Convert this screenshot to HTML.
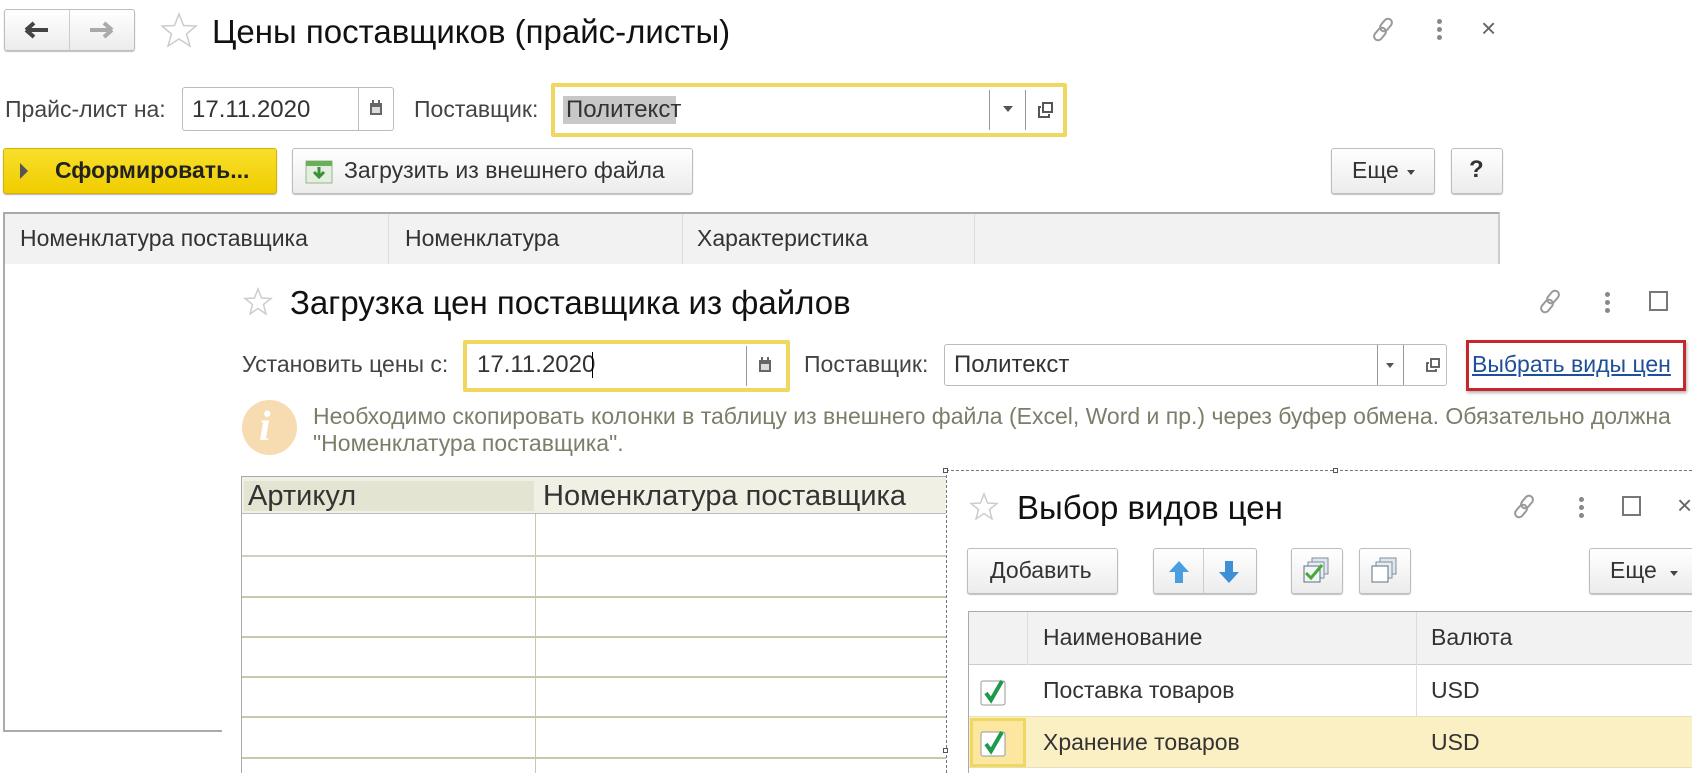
<!DOCTYPE html>
<html><head><meta charset="utf-8"><style>
*{box-sizing:border-box;margin:0;padding:0}
body{width:1692px;height:773px;background:#fff;position:relative;overflow:hidden;font-family:"Liberation Sans",Arial,sans-serif;color:#333}
.a{position:absolute;white-space:nowrap}
.btn{position:absolute;border:1px solid #bdbdbd;border-radius:3px;background:linear-gradient(#fff,#ececec);box-shadow:0 1px 1px rgba(0,0,0,.25)}
.t{position:absolute;white-space:nowrap;line-height:1}
</style></head><body>

<!-- main window header -->
<div class="btn" style="left:4px;top:9px;width:131px;height:42px"></div>
<div class="a" style="left:69px;top:10px;width:1px;height:40px;background:#ccc"></div>
<svg class="a" style="left:24px;top:20px" width="26" height="20"><path d="M2 10H24M2 10L10 3M2 10L10 17" stroke="#444" stroke-width="4" fill="none"/></svg>
<svg class="a" style="left:88px;top:20px" width="26" height="20"><path d="M24 10H2M24 10L16 3M24 10L16 17" stroke="#aaa" stroke-width="4" fill="none"/></svg>
<svg class="a" style="left:160px;top:12px" width="38" height="36"><path d="M19 2L23.5 13.5L36 14L26.5 22L30 34L19 27L8 34L11.5 22L2 14L14.5 13.5Z" fill="none" stroke="#ccc" stroke-width="1.5"/></svg>
<div class="t" style="left:212px;top:15px;font-size:33px;color:#111">Цены поставщиков (прайс-листы)</div>
<svg class="a" style="left:1370px;top:15px" width="30" height="30"><g fill="none" stroke="#999" stroke-width="2"><rect x="12" y="3" width="8" height="14" rx="4" transform="rotate(40 16 10)"/><rect x="6" y="12" width="8" height="14" rx="4" transform="rotate(40 10 19)"/></g></svg>
<div class="a" style="left:1437px;top:19px;width:5px;height:5px;border-radius:3px;background:#888;box-shadow:0 8px 0 #888,0 16px 0 #888"></div>
<div class="t" style="left:1481px;top:15px;font-size:26px;color:#666">×</div>

<!-- row 2 -->
<div class="t" style="left:5px;top:98px;font-size:23px;color:#444">Прайс-лист на:</div>
<div class="a" style="left:182px;top:87px;width:212px;height:44px;border:1px solid #bbb;border-radius:3px"></div>
<div class="a" style="left:358px;top:88px;width:1px;height:42px;background:#bbb"></div>
<div class="t" style="left:192px;top:98px;font-size:24px;color:#333">17.11.2020</div>
<svg class="a" style="left:369px;top:100px" width="14" height="16"><rect x="1" y="3" width="12" height="12" fill="#666"/><rect x="3" y="7" width="8" height="6" fill="#ddd"/><rect x="3" y="0" width="2" height="4" fill="#666"/><rect x="9" y="0" width="2" height="4" fill="#666"/></svg>
<div class="t" style="left:414px;top:98px;font-size:23px;color:#444">Поставщик:</div>
<div class="a" style="left:551px;top:83px;width:516px;height:54px;border:4px solid #f0d760;border-radius:2px"></div>
<div class="a" style="left:563px;top:96px;width:113px;height:28px;background:#c8c8c8"></div>
<div class="t" style="left:566px;top:98px;font-size:24px;color:#333">Политекст</div>
<div class="a" style="left:989px;top:90px;width:1px;height:40px;background:#999"></div>
<div class="a" style="left:1025px;top:90px;width:1px;height:40px;background:#999"></div>
<div class="a" style="left:1003px;top:106px;border:5px solid transparent;border-top:6px solid #555"></div>
<svg class="a" style="left:1037px;top:101px" width="18" height="18"><rect x="6" y="2" width="9" height="9" fill="none" stroke="#555" stroke-width="2"/><path d="M4 6H2V16H12V13" fill="none" stroke="#555" stroke-width="2"/></svg>

<!-- row 3 -->
<div class="a" style="left:3px;top:148px;width:274px;height:46px;background:linear-gradient(#f7df2a,#f0cd00);border:1px solid #d4b300;border-radius:3px;box-shadow:0 1px 1px rgba(0,0,0,.3)"></div>
<div class="a" style="left:20px;top:163px;border:8px solid transparent;border-left:8px solid #555;border-right:0"></div>
<div class="t" style="left:55px;top:159px;font-size:23px;font-weight:bold;color:#222">Сформировать...</div>
<div class="btn" style="left:292px;top:148px;width:401px;height:46px"></div>
<svg class="a" style="left:305px;top:160px" width="28" height="24"><rect x="1" y="1" width="26" height="22" fill="#e5efe0" stroke="#9ab58d"/><rect x="1" y="1" width="26" height="5" fill="#6cae5c"/><path d="M14 7V17M9 12L14 17L19 12" stroke="#3d8e3b" stroke-width="3" fill="none"/></svg>
<div class="t" style="left:344px;top:159px;font-size:23px;color:#333">Загрузить из внешнего файла</div>
<div class="btn" style="left:1331px;top:148px;width:104px;height:46px"></div>
<div class="t" style="left:1352px;top:159px;font-size:23px;color:#333">Еще</div>
<div class="a" style="left:1407px;top:170px;border:4px solid transparent;border-top:5px solid #444"></div>
<div class="btn" style="left:1451px;top:148px;width:52px;height:46px"></div>
<div class="t" style="left:1469px;top:158px;font-size:24px;font-weight:bold;color:#333">?</div>

<!-- main table -->
<div class="a" style="left:3px;top:212px;width:1497px;height:52px;background:#f2f2f2;border-top:2px solid #aaa;border-right:2px solid #ccc"></div>
<div class="a" style="left:3px;top:212px;width:2px;height:520px;background:#aaa"></div>
<div class="a" style="left:3px;top:730px;width:219px;height:2px;background:#aaa"></div>
<div class="a" style="left:388px;top:214px;width:1px;height:50px;background:#ddd"></div>
<div class="a" style="left:682px;top:214px;width:1px;height:50px;background:#ddd"></div>
<div class="a" style="left:974px;top:214px;width:1px;height:50px;background:#ddd"></div>
<div class="t" style="left:20px;top:227px;font-size:23px;color:#333">Номенклатура поставщика</div>
<div class="t" style="left:405px;top:227px;font-size:23px;color:#333">Номенклатура</div>
<div class="t" style="left:697px;top:227px;font-size:23px;color:#333">Характеристика</div>

<!-- second window -->
<div class="a" style="left:222px;top:264px;width:1470px;height:509px;background:#fff"></div>
<svg class="a" style="left:243px;top:287px" width="30" height="28"><path d="M15 2L18.5 11L28 11.5L20.5 17.5L23 27L15 21.5L7 27L9.5 17.5L2 11.5L11.5 11Z" fill="none" stroke="#ccc" stroke-width="1.5"/></svg>
<div class="t" style="left:290px;top:286px;font-size:33px;color:#111">Загрузка цен поставщика из файлов</div>
<svg class="a" style="left:1537px;top:287px" width="30" height="30"><g fill="none" stroke="#999" stroke-width="2"><rect x="12" y="3" width="8" height="14" rx="4" transform="rotate(40 16 10)"/><rect x="6" y="12" width="8" height="14" rx="4" transform="rotate(40 10 19)"/></g></svg>
<div class="a" style="left:1605px;top:292px;width:5px;height:5px;border-radius:3px;background:#888;box-shadow:0 8px 0 #888,0 16px 0 #888"></div>
<div class="a" style="left:1649px;top:291px;width:19px;height:20px;border:2px solid #777"></div>

<div class="t" style="left:242px;top:353px;font-size:23px;color:#444">Установить цены с:</div>
<div class="a" style="left:463px;top:340px;width:327px;height:52px;border:4px solid #f0d760;border-radius:2px"></div>
<div class="a" style="left:746px;top:346px;width:1px;height:40px;background:#999"></div>
<div class="t" style="left:477px;top:353px;font-size:24px;color:#333">17.11.2020</div>
<div class="a" style="left:592px;top:352px;width:1px;height:26px;background:#000"></div>
<svg class="a" style="left:758px;top:357px" width="14" height="16"><rect x="1" y="3" width="12" height="12" fill="#666"/><rect x="3" y="7" width="8" height="6" fill="#ddd"/><rect x="3" y="0" width="2" height="4" fill="#666"/><rect x="9" y="0" width="2" height="4" fill="#666"/></svg>
<div class="t" style="left:804px;top:353px;font-size:23px;color:#444">Поставщик:</div>
<div class="a" style="left:944px;top:344px;width:503px;height:42px;border:1px solid #bbb;border-radius:3px"></div>
<div class="a" style="left:1377px;top:345px;width:1px;height:40px;background:#999"></div>
<div class="a" style="left:1403px;top:345px;width:1px;height:40px;background:#999"></div>
<div class="t" style="left:954px;top:353px;font-size:24px;color:#333">Политекст</div>
<div class="a" style="left:1386px;top:363px;border:4px solid transparent;border-top:5px solid #555"></div>
<svg class="a" style="left:1425px;top:357px" width="16" height="16"><rect x="6" y="2" width="8" height="8" fill="none" stroke="#555" stroke-width="1.8"/><path d="M4 6H2V14H11V12" fill="none" stroke="#555" stroke-width="1.8"/></svg>
<div class="a" style="left:1466px;top:340px;width:220px;height:51px;border:3px solid #c8262d;box-shadow:1px 2px 3px rgba(0,0,0,.3)"></div>
<div class="t" style="left:1472px;top:353px;font-size:23px;color:#1f4f9a;text-decoration:underline">Выбрать виды цен</div>

<div class="a" style="left:242px;top:400px;width:55px;height:55px;border-radius:50%;background:#f6dcb0"></div>
<div class="t" style="left:259px;top:406px;font-size:42px;font-style:italic;font-weight:bold;color:#fff;font-family:'Liberation Serif',serif">i</div>
<div class="t" style="left:313px;top:405px;font-size:23px;color:#7d7d6a">Необходимо скопировать колонки в таблицу из внешнего файла (Excel, Word и пр.) через буфер обмена. Обязательно должна</div>
<div class="t" style="left:313px;top:432px;font-size:23px;color:#7d7d6a">"Номенклатура поставщика".</div>

<!-- load table -->
<div class="a" style="left:241px;top:476px;width:708px;height:297px;border-left:1px solid #aaa;border-top:1px solid #aaa"></div>
<div class="a" style="left:242px;top:477px;width:706px;height:37px;background:#f0f0e4"></div>
<div class="a" style="left:244px;top:481px;width:290px;height:30px;background:#e4e4d2"></div>
<div class="a" style="left:242px;top:513px;width:706px;height:1px;background:#bbb"></div>
<div class="a" style="left:535px;top:514px;width:1px;height:259px;background:#c8c8b0"></div>
<div class="t" style="left:248px;top:482px;font-size:29px;color:#333">Артикул</div>
<div class="t" style="left:543px;top:482px;font-size:29px;color:#333">Номенклатура поставщика</div>
<div class="a" style="left:242px;top:555px;width:706px;height:2px;background:#d0d0be"></div>
<div class="a" style="left:242px;top:596px;width:706px;height:2px;background:#c8c8aa"></div>
<div class="a" style="left:242px;top:636px;width:706px;height:2px;background:#c8c8aa"></div>
<div class="a" style="left:242px;top:676px;width:706px;height:2px;background:#c8c8aa"></div>
<div class="a" style="left:242px;top:716px;width:706px;height:2px;background:#c8c8aa"></div>
<div class="a" style="left:242px;top:757px;width:706px;height:2px;background:#c8c8aa"></div>

<!-- third window -->
<div class="a" style="left:946px;top:470px;width:746px;height:303px;background:#fff;border-left:1px dashed #777;border-top:1px dashed #777"></div>
<div class="a" style="left:943px;top:468px;width:5px;height:5px;border:1px solid #555;background:#fff"></div>
<div class="a" style="left:1333px;top:468px;width:5px;height:5px;border:1px solid #555;background:#fff"></div>
<div class="a" style="left:943px;top:748px;width:5px;height:5px;border:1px solid #555;background:#fff"></div>
<svg class="a" style="left:969px;top:492px" width="30" height="28"><path d="M15 2L18.5 11L28 11.5L20.5 17.5L23 27L15 21.5L7 27L9.5 17.5L2 11.5L11.5 11Z" fill="none" stroke="#ccc" stroke-width="1.5"/></svg>
<div class="t" style="left:1017px;top:491px;font-size:33px;color:#111">Выбор видов цен</div>
<svg class="a" style="left:1511px;top:492px" width="30" height="30"><g fill="none" stroke="#999" stroke-width="2"><rect x="12" y="3" width="8" height="14" rx="4" transform="rotate(40 16 10)"/><rect x="6" y="12" width="8" height="14" rx="4" transform="rotate(40 10 19)"/></g></svg>
<div class="a" style="left:1579px;top:497px;width:5px;height:5px;border-radius:3px;background:#888;box-shadow:0 8px 0 #888,0 16px 0 #888"></div>
<div class="a" style="left:1622px;top:496px;width:19px;height:20px;border:2px solid #777"></div>
<div class="t" style="left:1677px;top:492px;font-size:26px;color:#666">×</div>

<div class="btn" style="left:967px;top:548px;width:151px;height:46px"></div>
<div class="t" style="left:990px;top:559px;font-size:23px;color:#333">Добавить</div>
<div class="btn" style="left:1153px;top:548px;width:104px;height:46px"></div>
<div class="a" style="left:1203px;top:549px;width:1px;height:44px;background:#ccc"></div>
<svg class="a" style="left:1168px;top:560px" width="22" height="24"><path d="M11 1L21 12H15V23H7V12H1Z" fill="#4a9ee0"/></svg>
<svg class="a" style="left:1218px;top:560px" width="22" height="24"><path d="M11 23L21 12H15V1H7V12H1Z" fill="#3d8fd6"/></svg>
<div class="btn" style="left:1291px;top:548px;width:52px;height:46px"></div>
<svg class="a" style="left:1303px;top:557px" width="28" height="28"><rect x="9" y="1" width="16" height="16" fill="#dfe6ec" stroke="#7f8e9a"/><rect x="5" y="5" width="16" height="16" fill="#e7edf2" stroke="#7f8e9a"/><rect x="1" y="9" width="16" height="16" fill="#f2f5f7" stroke="#5e7080"/><path d="M3 16L8 21L19 8" stroke="#4aa83a" stroke-width="3" fill="none"/></svg>
<div class="btn" style="left:1359px;top:548px;width:52px;height:46px"></div>
<svg class="a" style="left:1371px;top:557px" width="28" height="28"><rect x="9" y="1" width="16" height="16" fill="#dfe6ec" stroke="#7f8e9a"/><rect x="5" y="5" width="16" height="16" fill="#e7edf2" stroke="#7f8e9a"/><rect x="1" y="9" width="16" height="16" fill="#fff" stroke="#5e7080"/></svg>
<div class="btn" style="left:1589px;top:548px;width:110px;height:46px"></div>
<div class="t" style="left:1610px;top:559px;font-size:23px;color:#333">Еще</div>
<div class="a" style="left:1670px;top:571px;border:4px solid transparent;border-top:5px solid #444"></div>

<div class="a" style="left:968px;top:611px;width:724px;height:162px;border-left:1px solid #aaa;border-top:1px solid #aaa"></div>
<div class="a" style="left:969px;top:612px;width:723px;height:53px;background:#f2f2f2;border-bottom:1px solid #ccc"></div>
<div class="a" style="left:1027px;top:612px;width:1px;height:53px;background:#ddd"></div>
<div class="a" style="left:1416px;top:612px;width:1px;height:156px;background:#ddd"></div>
<div class="t" style="left:1043px;top:626px;font-size:23px;color:#333">Наименование</div>
<div class="t" style="left:1431px;top:626px;font-size:23px;color:#333">Валюта</div>
<div class="a" style="left:969px;top:716px;width:723px;height:52px;background:#fbf0c4;border-top:1px solid #e8e0b8;border-bottom:1px solid #e8e0b8"></div>
<div class="a" style="left:970px;top:718px;width:56px;height:49px;border:3px solid #f0d760;background:#fbe7a0"></div>
<div class="t" style="left:1043px;top:679px;font-size:23px;color:#333">Поставка товаров</div>
<div class="t" style="left:1431px;top:679px;font-size:23px;color:#333">USD</div>
<div class="t" style="left:1043px;top:731px;font-size:23px;color:#333">Хранение товаров</div>
<div class="t" style="left:1431px;top:731px;font-size:23px;color:#333">USD</div>
<svg class="a" style="left:980px;top:677px" width="30" height="30"><rect x="1" y="4" width="24" height="24" rx="2" fill="#fff" stroke="#999"/><path d="M6 16L11 23L22 4" stroke="#1e9a4e" stroke-width="4" fill="none"/></svg>
<svg class="a" style="left:980px;top:728px" width="30" height="30"><rect x="1" y="4" width="24" height="24" rx="2" fill="#fff" stroke="#999"/><path d="M6 16L11 23L22 4" stroke="#1e9a4e" stroke-width="4" fill="none"/></svg>
</body></html>
